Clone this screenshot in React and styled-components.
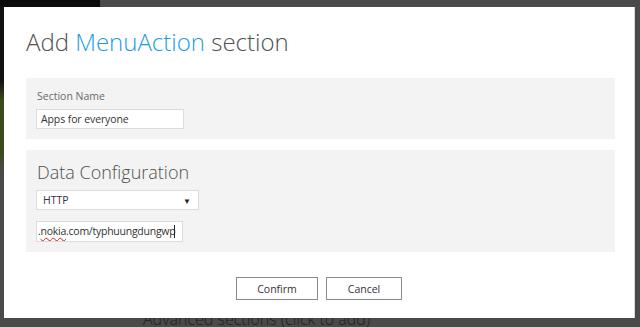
import React from 'react'
import styled, { createGlobalStyle } from 'styled-components'

const Global = createGlobalStyle`
    html, body {
        margin: 0;
        padding: 0;
        background: #4a4a4a;
        overflow: hidden;
    }
    body {
        font-family: "Open Sans", "Noto Sans", sans-serif;
    }
`

function App() {
    return (
        <Page>
            <Global />
            <TopStrip>
                <DarkPatch />
            </TopStrip>
            <Dialog>
                <Title>
                    Add <Accent>MenuAction</Accent> section
                </Title>
                <Panel>
                    <Label>Section Name</Label>
                    <Field width={148}>Apps for everyone</Field>
                </Panel>
                <Panel spaced>
                    <PanelHeading>Data Configuration</PanelHeading>
                    <Select>
                        <span>HTTP</span>
                        <Arrow>▼</Arrow>
                    </Select>
                    <Field width={147} tall tight>
                        .<Misspelled>nokia</Misspelled>.com/typhuungdungwp<Caret />
                    </Field>
                </Panel>
                <Actions>
                    <Button width={82}>Confirm</Button>
                    <Button width={76}>Cancel</Button>
                </Actions>
            </Dialog>
            <BehindText>Advanced sections (click to add)</BehindText>
        </Page>
    )
}

export default App

const Page = styled.div`
    width: 640px;
    height: 327px;
    overflow: hidden;
    background:
        linear-gradient(to bottom, #111 0px, #111 80px, #3b4a1a 100px, #3b4a1a 150px, #4a4a4a 170px) 0 0 / 4px 100% no-repeat,
        #4a4a4a;
`

const TopStrip = styled.div`
    height: 7px;
    background: #4a4a4a;
    display: flex;
`

const DarkPatch = styled.div`
    width: 100px;
    background: #0c0c0c;
`

const Dialog = styled.div`
    position: relative;
    z-index: 1;
    margin-left: 4px;
    width: 631px;
    height: 311px;
    box-sizing: border-box;
    background: #fff;
    border-right: 1px solid #d8d8d8;
    padding: 20px 20px 0 22px;
    display: flex;
    flex-direction: column;
`

const Title = styled.h1`
    margin: 0 0 21px;
    font-size: 24px;
    line-height: 30px;
    font-weight: 300;
    color: #505050;
`

const Accent = styled.span`
    color: #1d9ce0;
`

const Panel = styled.div`
    width: 589px;
    box-sizing: border-box;
    background: #f3f3f3;
    padding: 11px 10px 10px 10px;
    margin-top: ${props => props.spaced ? '11px' : '0'};
    display: flex;
    flex-direction: column;
    align-items: flex-start;
`

const Label = styled.div`
    font-size: 10.5px;
    line-height: 14px;
    color: #6a6a6a;
    margin-left: 1px;
    margin-bottom: 6px;
`

const PanelHeading = styled.div`
    font-size: 18px;
    line-height: 22px;
    font-weight: 300;
    color: #505050;
    margin-left: 1px;
    margin-bottom: 7px;
`

const Field = styled.div`
    width: ${props => props.width}px;
    height: ${props => props.tall ? 21 : 20}px;
    box-sizing: border-box;
    background: #fff;
    border: 1px solid #dcdcdc;
    padding: 0 ${props => props.tight ? 1 : 4}px;
    font-size: 10.5px;
    letter-spacing: ${props => props.tight ? '-0.25px' : '-0.1px'};
    line-height: ${props => props.tall ? 19 : 18}px;
    color: #333;
    white-space: nowrap;
    overflow: hidden;
    display: flex;
    align-items: center;
`

const Misspelled = styled.span`
    text-decoration: underline wavy #d02020;
    text-decoration-thickness: 1px;
    text-underline-offset: 2px;
`

const Caret = styled.span`
    display: inline-block;
    flex-shrink: 0;
    width: 1px;
    height: 13px;
    background: #222;
    margin-left: -1px;
`

const Select = styled.div`
    width: 163px;
    height: 20px;
    box-sizing: border-box;
    background: #fff;
    border: 1px solid #dcdcdc;
    padding: 0 7px 0 6px;
    margin-bottom: 11px;
    font-size: 10.5px;
    color: #333;
    display: flex;
    align-items: center;
    justify-content: space-between;
`

const Arrow = styled.span`
    font-size: 8px;
    color: #222;
`

const Actions = styled.div`
    display: flex;
    justify-content: center;
    gap: 8px;
    margin-top: 25px;
    padding-right: 2px;
`

const Button = styled.div`
    width: ${props => props.width}px;
    height: 23px;
    box-sizing: border-box;
    border: 1px solid #8a8a8a;
    background: #fff;
    font-size: 10.5px;
    color: #333;
    display: flex;
    align-items: center;
    justify-content: center;
`

const BehindText = styled.div`
    margin-top: -9px;
    padding-left: 143px;
    font-size: 16px;
    line-height: 20px;
    font-weight: 300;
    color: #1e1e1e;
    white-space: nowrap;
`
